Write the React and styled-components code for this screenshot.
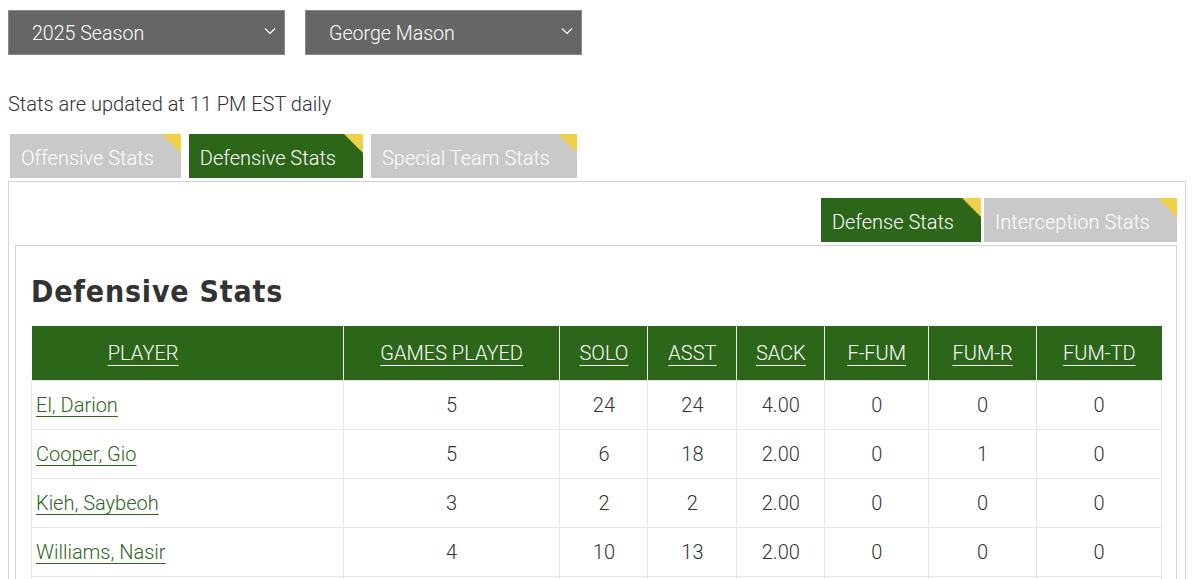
import styled, { createGlobalStyle } from "styled-components";

const GREEN = "#2c6619";

const Global = createGlobalStyle`
  body {
    margin: 0;
    padding: 10px 14px 0 8px;
    background: #fff;
    font-family: Roboto, "Liberation Sans", sans-serif;
    font-weight: 300;
    color: #333;
  }
`;

const Filters = styled.div`
  display: flex;
  gap: 20px;
`;

const SelectBox = styled.div`
  position: relative;
  width: 277px;
  height: 45px;
  box-sizing: border-box;
  background: #666;
  border: 1px solid #8a8a8a;
  color: #fff;
  font-size: 19.6px;
  display: flex;
  align-items: center;
  padding: 2px 0 0 23px;
  svg {
    position: absolute;
    right: 8px;
    top: 16px;
  }
`;

const Note = styled.p`
  margin: 36px 0 0 0;
  font-size: 20px;
  line-height: 26px;
`;

const TabRow = styled.div`
  display: flex;
  gap: ${(p) => p.gap || 8}px;
  justify-content: ${(p) => (p.right ? "flex-end" : "flex-start")};
  padding: ${(p) => p.pad || "0"};
`;

const Tab = styled.div`
  position: relative;
  height: 44px;
  box-sizing: border-box;
  padding: 4px 27px 0 11px;
  display: flex;
  align-items: center;
  font-size: 20px;
  color: #fff;
  background: ${(p) => (p.active ? GREEN : "#c9c9c9")};
  &::after {
    content: "";
    position: absolute;
    top: 0;
    right: 0;
    border-style: solid;
    border-width: 0 19px 19px 0;
    border-color: transparent #f0d048 transparent transparent;
  }
`;

const Panel = styled.div`
  margin-top: 3px;
  border: 1px solid #d4d4d4;
  border-bottom: none;
  padding: 16px 8px 0 6px;
  height: 420px;
  box-sizing: border-box;
`;

const Inner = styled.div`
  margin-top: 3px;
  border: 1px solid #d4d4d4;
  border-bottom: none;
  padding: 24px 14px 0 15px;
`;

const Title = styled.h2`
  margin: 0 0 12px 0;
  font-family: "DejaVu Sans Condensed", "DejaVu Sans", sans-serif;
  font-weight: bold;
  font-size: 30px;
  letter-spacing: 0.8px;
  line-height: 44px;
  color: #333;
`;

const Table = styled.table`
  width: 1131px;
  border-collapse: collapse;
  font-size: 20px;
`;

const Th = styled.th`
  background: ${GREEN};
  color: #fff;
  font-weight: 300;
  height: 54px;
  padding: 0 ${(p) => p.padRight || 0}px 0 0;
  border-left: 1px solid #e6e6e6;
  text-align: center;
  &:first-child {
    border-left: none;
  }
  span {
    text-decoration: underline;
    text-underline-offset: 5px;
    text-decoration-thickness: 1px;
  }
`;

const Td = styled.td`
  height: 48px;
  padding: 0 0 0 ${(p) => (p.left ? 4 : 0)}px;
  text-align: ${(p) => (p.left ? "left" : "center")};
  border: 1px solid #e6e6e6;
  color: #333;
  a {
    color: ${GREEN};
    text-decoration: underline;
    text-underline-offset: 4px;
    text-decoration-thickness: 1px;
  }
`;

const Chevron = () => (
  <svg width="12" height="8" viewBox="0 0 12 8">
    <path d="M1 1.5 L6 6.5 L11 1.5" fill="none" stroke="#fff" strokeWidth="1.2" />
  </svg>
);

const columns = [
  { label: "PLAYER", width: 312, padRight: 88 },
  { label: "GAMES PLAYED", width: 217 },
  { label: "SOLO", width: 88 },
  { label: "ASST", width: 89 },
  { label: "SACK", width: 88 },
  { label: "F-FUM", width: 104 },
  { label: "FUM-R", width: 108 },
  { label: "FUM-TD", width: 125 },
];

const rows = [
  ["El, Darion", 5, 24, 24, "4.00", 0, 0, 0],
  ["Cooper, Gio", 5, 6, 18, "2.00", 0, 1, 0],
  ["Kieh, Saybeoh", 3, 2, 2, "2.00", 0, 0, 0],
  ["Williams, Nasir", 4, 10, 13, "2.00", 0, 0, 0],
  ["", "", "", "", "", "", "", ""],
];

export default function App() {
  return (
    <>
      <Global />
      <Filters>
        <SelectBox>
          2025 Season
          <Chevron />
        </SelectBox>
        <SelectBox>
          George Mason
          <Chevron />
        </SelectBox>
      </Filters>
      <Note>Stats are updated at 11 PM EST daily</Note>
      <TabRow pad="17px 0 0 2px" gap={8}>
        <Tab>Offensive Stats</Tab>
        <Tab active>Defensive Stats</Tab>
        <Tab>Special Team Stats</Tab>
      </TabRow>
      <Panel>
        <TabRow right gap={3} pad="0">
          <Tab active>Defense Stats</Tab>
          <Tab>Interception Stats</Tab>
        </TabRow>
        <Inner>
          <Title>Defensive Stats</Title>
          <Table>
            <colgroup>
              {columns.map((c) => (
                <col key={c.label} style={{ width: c.width }} />
              ))}
            </colgroup>
            <thead>
              <tr>
                {columns.map((c) => (
                  <Th key={c.label} padRight={c.padRight}>
                    <span>{c.label}</span>
                  </Th>
                ))}
              </tr>
            </thead>
            <tbody>
              {rows.map((r, i) => (
                <tr key={i}>
                  {r.map((v, j) =>
                    j === 0 ? (
                      <Td key={j} left>
                        <a href="#">{v}</a>
                      </Td>
                    ) : (
                      <Td key={j}>{v}</Td>
                    )
                  )}
                </tr>
              ))}
            </tbody>
          </Table>
        </Inner>
      </Panel>
    </>
  );
}
